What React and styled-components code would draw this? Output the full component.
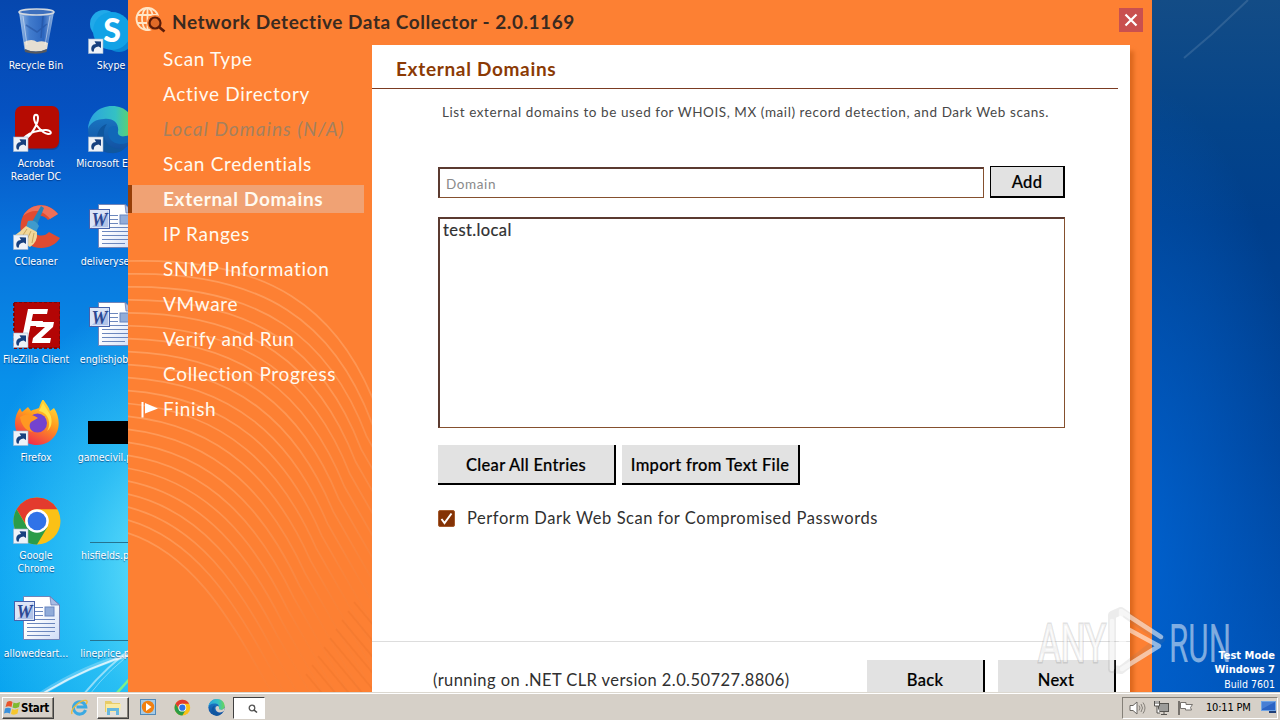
import styled, { createGlobalStyle } from "styled-components";

const GlobalStyle = createGlobalStyle`
  * {
    box-sizing: border-box;
  }
  body {
    margin: 0;
    overflow: hidden;
    font-family: Lato, "Liberation Sans", sans-serif;
  }
  svg {
    display: block;
  }
`;

const steps = [
  { name: "Scan Type" },
  { name: "Active Directory" },
  { name: "Local Domains (N/A)", disabled: true },
  { name: "Scan Credentials" },
  { name: "External Domains", active: true },
  { name: "IP Ranges" },
  { name: "SNMP Information" },
  { name: "VMware" },
  { name: "Verify and Run" },
  { name: "Collection Progress" },
  { name: "Finish", flag: true },
];

const Shortcut = () => (
  <g transform="translate(1.5 31)">
    <rect width="14.5" height="14.5" fill="#eef2f8" stroke="#9db4cf" strokeWidth=".6" />
    <path d="M3.5 12.5C1.5 8 4 5 7.500 5L6 2.200L12.500 2.500L12.500 9L10.200 7.500C7 8 5 9.500 5.500 12.500Z" fill="#17407e" />
  </g>
);

const RecycleBin = () => (
  <svg width="48" height="48" viewBox="0 0 48 48">
    <defs>
      <linearGradient id="bin">
        <stop offset="0" stopColor="#c5dcf3" stopOpacity=".85" />
        <stop offset=".3" stopColor="#5d92d8" stopOpacity=".7" />
        <stop offset=".7" stopColor="#3c72c4" stopOpacity=".7" />
        <stop offset="1" stopColor="#b3cdec" stopOpacity=".85" />
      </linearGradient>
    </defs>
    <path d="M7 4L12.500 42Q24 47 35 42L42 4Z" fill="url(#bin)" />
    <path d="M12 34Q20 30 25 34Q31 32 36 35L35 41Q24 46 13 41Z" fill="#e5dfd2" />
    <path d="M12.500 41Q24 46 35 41L34.500 44Q24 47.500 13 44Z" fill="#56595e" />
    <ellipse cx="24.500" cy="4" rx="17.500" ry="3" fill="#3e70bd" stroke="#d2d8df" strokeWidth="1.600" />
    <path d="M14 17L25 24L35 16M31 8L29 30" stroke="#224f9b" strokeWidth="1.500" fill="none" opacity=".55" />
    <path d="M11 8L15 37M38 8L33 37" stroke="#fff" opacity=".45" />
  </svg>
);

const Skype = () => (
  <svg width="48" height="48" viewBox="0 0 48 48">
    <circle cx="17" cy="16" r="14" fill="#21a9e9" />
    <circle cx="32" cy="30" r="14" fill="#0a87d4" />
    <circle cx="25" cy="23" r="19" fill="#12a2e6" />
    <text x="25" y="34" textAnchor="middle" fontFamily="Lato" fontWeight="900" fontSize="32" fill="#fff">S</text>
    <Shortcut />
  </svg>
);

const Acrobat = () => (
  <svg width="48" height="48" viewBox="0 0 48 48">
    <rect x="3.500" y="1" width="44" height="43" rx="7" fill="#18366d" opacity=".5" />
    <rect x="3" y="0" width="44" height="42.500" rx="7" fill="#b60b02" />
    <path d="M13 33C19 30 26 18 26 12C26 7.500 22 7.500 22 12C22 18 30 27 36 28C41 28.500 39 23.500 33 24C26 24.500 18 27 14 30C10 33 10 36 13 33Z" fill="none" stroke="#fff" strokeWidth="2" />
    <Shortcut />
  </svg>
);

const Edge = ({ size = 48, arrow = true }) => (
  <svg width={size} height={size} viewBox="0 0 48 48">
    <defs>
      <linearGradient id="edgeTop">
        <stop offset="0" stopColor="#2ba2df" />
        <stop offset=".6" stopColor="#34c1c4" />
        <stop offset="1" stopColor="#6bd753" />
      </linearGradient>
      <linearGradient id="edgeLow" x2="0" y2="1">
        <stop offset="0" stopColor="#1b7fcb" />
        <stop offset="1" stopColor="#124e9f" />
      </linearGradient>
    </defs>
    <circle cx="24" cy="24" r="23" fill="url(#edgeLow)" />
    <path d="M1 23C2 9 12 0 25 0C39 0 47 10 47 20C47 28 41 31 35 31C28 31 29 27 31 25C32 16 25 12 17 13C9 13 3 17 1 23Z" fill="url(#edgeTop)" />
    <path d="M17 26C16 36 24 44 37 43C32 48 22 49 15 43C7 36 9 21 20 18C18 21 17 23 17 26Z" fill="#0f579f" />
    <path d="M31 25C30 30 35 32 42 29L47 25L45 34C37 41 22 39 21 27C21 23 23 20 27 20C30 20 32 22 31 25Z" fill={arrow ? "#1167b8" : "#d6d0c8"} />
    {arrow && <Shortcut />}
  </svg>
);

const CCleaner = () => (
  <svg width="48" height="48" viewBox="0 0 48 48">
    <path d="M46 10C36-3 18-1 11 12C5 25 10 39 22 43C33 46 43 42 48 34L37 28C31 35 20 31 20 22C20 13 30 8 36 16Z" fill="#e04b31" />
    <path d="M46 10C36-3 18-1 11 12C20 5 30 5 38 15Z" fill="#ee7059" />
    <path d="M29 2L32 4L25 21L20 18Z" fill="#2584bb" />
    <path d="M16 17Q23 15 27 22L24 28L14 23Z" fill="#3f9bcd" />
    <path d="M14 22L25 28Q26 38 18 43Q8 37 2 32Q9 27 14 22Z" fill="#f1d799" />
    <path d="M15 25L9 34M19 27L14 38M22 29L20 39" stroke="#c8a45c" />
    <Shortcut />
  </svg>
);

const WordDoc = () => (
  <svg width="48" height="48" viewBox="0 0 48 48">
    <defs>
      <linearGradient id="page" x2="1" y2="1">
        <stop offset=".4" stopColor="#fff" />
        <stop offset="1" stopColor="#cfdcf6" />
      </linearGradient>
    </defs>
    <path d="M11.500.500H38L47.500 9V43.500H11.500Z" fill="url(#page)" stroke="#7285b8" />
    <path d="M38 .500L39 9H47.500Z" fill="#a9bce4" stroke="#5d73ad" strokeWidth=".7" />
    <path d="M23 11.500H31M23 15.500H31M23 19.500H31M15 23.500H43M15 27.500H43M15 31.500H43M15 35.500H43M15 39.500H38" stroke="#6c87bd" />
    <rect x="33" y="11" width="9" height="9" fill="#91acd9" stroke="#6886c0" />
    <rect x="2.500" y="5.500" width="20" height="19" fill="#dce5f7" stroke="#4762ab" />
    <path d="M4 24L21 7V23H4Z" fill="#b1c3e8" />
    <text x="12.500" y="21.500" textAnchor="middle" fontFamily="Liberation Serif" fontWeight="700" fontStyle="italic" fontSize="18" fill="#2c4892">W</text>
  </svg>
);

const FileZilla = () => (
  <svg width="48" height="48" viewBox="0 0 48 48">
    <rect x="2" y="0" width="46" height="46" fill="#b30505" stroke="#7d0709" strokeWidth="2" strokeDasharray="3 2" />
    <path d="M16 7H36L35 12H21L19.500 19H31L30 24H18.500L16 36H10Z" fill="#fff" />
    <path d="M25 20H42L41 25L29 36H39L38 41H20L21 36L33 25H24Z" fill="#fff" />
    <Shortcut />
  </svg>
);

const Firefox = () => (
  <svg width="48" height="48" viewBox="0 0 48 48">
    <defs>
      <linearGradient id="fox" x1=".8" y1="0" x2=".3" y2="1">
        <stop offset="0" stopColor="#ffe33b" />
        <stop offset=".45" stopColor="#ff9a1e" />
        <stop offset="1" stopColor="#f0264f" />
      </linearGradient>
    </defs>
    <path d="M31-1C34 4 37 7 38 11L42 8C47 15 48 25 45 32C41 41 33 45 25 45C13 45 3 36 3 23C3 17 5 12 8 8L10 12L16 7L19 11C22 9 26 9 27 8C28 5 29 2 31-1Z" fill="url(#fox)" />
    <circle cx="25.500" cy="23" r="9.500" fill="#7443cf" />
    <path d="M8 17C15 13 20 14 26 18L19 22C17 24 17 29 21 32C13 31 9 24 8 17Z" fill="#ff9822" />
    <path d="M27 11C38 13 39 26 35 31C41 27 41 17 36 11L31 3Z" fill="#ffe24a" />
    <Shortcut />
  </svg>
);

const Chrome = ({ size = 48, arrow = true }) => (
  <svg width={size} height={size} viewBox="0 0 48 48" overflow="visible">
    <circle cx="25" cy="23" r="23.500" fill="#fbc116" />
    <path d="M4.600 11.300A23.500 23.500 0 0 1 45.400 11.300H25A12 12 0 0 0 13 25Z" fill="#e33b2e" />
    <path d="M4.600 11.300A23.500 23.500 0 0 0 25 46.500L35.500 29L25 30L14.800 28.500Z" fill="#2b9c48" />
    <circle cx="25" cy="23" r="11.800" fill="#fff" />
    <circle cx="25" cy="23" r="9.300" fill="#2f73e8" />
    {arrow && <Shortcut />}
  </svg>
);

const BlackThumb = () => (
  <svg width="48" height="48">
    <rect x="1" y="21" width="47" height="23" />
  </svg>
);

const LineThumb = () => (
  <svg width="48" height="48">
    <path d="M3 44.500H48" stroke="#26738f" />
  </svg>
);

const shortcuts = [
  { name: "Recycle Bin", icon: <RecycleBin /> },
  { name: "Acrobat Reader DC", icon: <Acrobat />, wrap: true },
  { name: "CCleaner", icon: <CCleaner /> },
  { name: "FileZilla Client", icon: <FileZilla /> },
  { name: "Firefox", icon: <Firefox /> },
  { name: "Google Chrome", icon: <Chrome />, wrap: true },
  { name: "allowedeart...", icon: <WordDoc /> },
  { name: "Skype", icon: <Skype /> },
  { name: "Microsoft Edge", icon: <Edge /> },
  { name: "deliveryser...", icon: <WordDoc /> },
  { name: "englishjobs...", icon: <WordDoc /> },
  { name: "gamecivil.png", icon: <BlackThumb /> },
  { name: "hisfields.png", icon: <LineThumb /> },
  { name: "lineprice.png", icon: <LineThumb /> },
];

const Streaks = () => (
  <Wallpaper width="1280" height="692">
    <g fill="none" stroke="#fff">
      <path d="M38 696Q85 665 136 653" strokeWidth="5" opacity=".25" />
      <path d="M42 694Q88 666 136 653" strokeWidth="2" opacity=".75" />
      <path d="M84 694Q105 668 136 645" strokeWidth="2" opacity=".5" />
      <path d="M90 694Q110 668 136 650" opacity=".4" />
      <path d="M1184 58L1212 34L1248 0" strokeWidth="2" opacity=".12" />
    </g>
    <path d="M116 694L134 674" stroke="#79f08c" strokeWidth="2.500" />
  </Wallpaper>
);

// concentric waves behind the step list
const Waves = () => {
  const lines = [];
  for (let i = 0; i < 22; i++) {
    const t = i / 21;
    const mix = (a, b) => a + (b - a) * t;
    lines.push(
      <path
        key={i}
        d={`M0 ${mix(31, 303)}C${mix(140, 62)} ${mix(27, 323)} ${mix(212, 100)} ${mix(78, 385)} ${mix(250, 132)} ${mix(182, 442)}l60 105`}
      />
    );
  }
  return (
    <WaveArt width="244" height="462">
      <defs>
        <linearGradient id="wave" gradientUnits="userSpaceOnUse" x1="0" y1="120" x2="230" y2="370">
          <stop offset="0" stopColor="#ffb27c" stopOpacity=".55" />
          <stop offset=".5" stopColor="#ffb27c" stopOpacity=".45" />
          <stop offset=".85" stopColor="#f0a070" stopOpacity=".22" />
          <stop offset="1" stopColor="#e08850" stopOpacity=".08" />
        </linearGradient>
      </defs>
      <g fill="none" stroke="url(#wave)" strokeWidth="1.700">
        {lines}
      </g>
      <g stroke="#e06a25" strokeOpacity=".22" strokeWidth="1.800">
        {[0, 1, 2, 3, 4, 5, 6, 7, 8].map((i) => (
          <path key={i} d={`M${178 + i * 6} ${444 - i * 9}l70 84`} />
        ))}
      </g>
    </WaveArt>
  );
};

const Watermark = () => (
  <Mark width="230" height="74">
    <g fontFamily="Roboto" fontSize="53" fill="#fff">
      <g fill="#fff" fillOpacity=".6" stroke="#777" strokeOpacity=".22" strokeWidth="3" paintOrder="stroke">
        <text x="8" y="56" textLength="68" lengthAdjust="spacingAndGlyphs">ANY</text>
      </g>
      <text x="139" y="56" textLength="62" lengthAdjust="spacingAndGlyphs" fillOpacity=".5">RUN</text>
    </g>
    <g fill="none" strokeLinejoin="round" strokeLinecap="round">
      <path d="M82 63V9L91 5L131 33L91 64Z" stroke="#777" strokeOpacity=".14" strokeWidth="8" />
      <path d="M82 63V15M91 46V5L131 31M94 48V21L129 40L92 63" stroke="#fff" strokeOpacity=".55" strokeWidth="4.500" />
    </g>
  </Mark>
);

function App() {
  return (
    <Desktop>
      <GlobalStyle />
      <Streaks />
      <IconGrid>
        {shortcuts.map((item) => (
          <DesktopIcon key={item.name}>
            {item.icon}
            <IconLabel $wrap={item.wrap}>{item.name}</IconLabel>
          </DesktopIcon>
        ))}
      </IconGrid>
      <BuildInfo>
        <b>Test Mode</b>
        <b>Windows 7</b>
        <span>Build 7601</span>
      </BuildInfo>

      <Window>
        <TitleBar>
          <svg width="31" height="27" viewBox="0 0 31 27">
            <g fill="none" stroke="#ffe6c8" strokeWidth="1.800">
              <circle cx="12.500" cy="12" r="11" />
              <ellipse cx="12.500" cy="12" rx="5.500" ry="11" />
              <path d="M12.500 1V23M2 8H23M2 16H16" />
            </g>
            <circle cx="20" cy="16" r="8" fill="#fd8033" />
            <circle cx="20" cy="16" r="5.500" fill="#e06b28" stroke="#5b1c08" strokeWidth="2.200" />
            <path d="M24 20L29.500 24.500" stroke="#5b1c08" strokeWidth="2.800" />
          </svg>
          <Title>Network Detective Data Collector - 2.0.1169</Title>
          <CloseButton>
            <svg width="14" height="14" viewBox="0 0 14 14">
              <path d="M1.500 1.500L12.500 12.500M12.500 1.500L1.500 12.500" stroke="#fff" strokeWidth="2.200" />
            </svg>
          </CloseButton>
        </TitleBar>
        <WindowBody>
          <Sidebar>
            <Waves />
            {steps.map((step) => (
              <Step key={step.name} $active={step.active} $disabled={step.disabled}>
                {step.flag && (
                  <Flag width="17" height="17" viewBox="0 0 17 17">
                    <path d="M1.500 1V16.500" stroke="#fff" strokeWidth="2" />
                    <path d="M4 2L17 7.500L4 12.500Z" fill="#fff" />
                  </Flag>
                )}
                {step.name}
              </Step>
            ))}
          </Sidebar>
          <Panel>
            <Heading>External Domains</Heading>
            <Content>
              <Hint>List external domains to be used for WHOIS, MX (mail) record detection, and Dark Web scans.</Hint>
              <EntryRow>
                <DomainInput placeholder="Domain" />
                <AddButton>Add</AddButton>
              </EntryRow>
              <DomainList>test.local</DomainList>
              <ButtonRow>
                <Button>Clear All Entries</Button>
                <Button>Import from Text File</Button>
              </ButtonRow>
              <CheckRow>
                <CheckBox>
                  <svg width="13" height="13" viewBox="0 0 13 13">
                    <path d="M1.500 7L4.500 11L11.500 1.500" fill="none" stroke="#fff" strokeWidth="2" />
                  </svg>
                </CheckBox>
                Perform Dark Web Scan for Compromised Passwords
              </CheckRow>
            </Content>
            <PanelFooter>
              <Runtime>(running on .NET CLR version 2.0.50727.8806)</Runtime>
              <NavButton>Back</NavButton>
              <NavButton>Next</NavButton>
            </PanelFooter>
          </Panel>
        </WindowBody>
      </Window>

      <Taskbar>
        <StartButton>
          <svg width="17" height="16" viewBox="0 0 17 16">
            <path d="M3 2Q6 0 8.500 2L7.500 7Q4.500 5.500 1.500 7Z" fill="#e9542c" />
            <path d="M9.500 2.500Q12.500 4 16 2L15 7Q12 9 8.500 7.500Z" fill="#7fba32" />
            <path d="M1 8.500Q4 7 7 8.500L6 13.500Q3 12 0 13.500Z" fill="#3a91dc" />
            <path d="M8 9Q11 10.500 14.500 8.500L13.500 13.500Q10.500 15.500 7 14Z" fill="#f6c62d" />
          </svg>
          Start
        </StartButton>
        <QuickItem $left={9}>
          <svg width="17" height="17" viewBox="0 0 17 17">
            <path d="M14.500 11A6.200 6.200 0 1 1 14.800 8H5.500" fill="none" stroke="#3ba9e2" strokeWidth="3" />
            <path d="M1 15C-1 10 9 1 15 1.500C17 2 16 4 15 5" fill="none" stroke="#eebb37" strokeWidth="1.300" />
          </svg>
        </QuickItem>
        <QuickItem $open $left={2}>
          <svg width="18" height="17" viewBox="0 0 18 17">
            <path d="M1 2H7L8.500 4H16V13H1Z" fill="#e8cc68" />
            <path d="M2 5H17L16 13H2Z" fill="#faeba4" />
            <path d="M3 9H15V16H12V12H6V16H3Z" fill="#68b8df" />
          </svg>
        </QuickItem>
        <QuickItem $left={2}>
          <svg width="17" height="17" viewBox="0 0 17 17">
            <rect x=".5" y=".5" width="15" height="15" fill="#a6cbe7" stroke="#5289b7" />
            <circle cx="8" cy="8" r="6.200" fill="#f28010" />
            <path d="M6 4L11.500 8L6 12Z" fill="#fff" />
          </svg>
        </QuickItem>
        <QuickItem $left={2}>
          <Chrome size={16} arrow={false} />
        </QuickItem>
        <QuickItem $left={2}>
          <Edge size={17} arrow={false} />
        </QuickItem>
        <ActiveTask>
          <svg width="10" height="10" viewBox="0 0 10 10">
            <circle cx="4" cy="4" r="2.800" fill="none" stroke="#555" strokeWidth="1.300" />
            <path d="M6 6L9 8.500" stroke="#444" strokeWidth="1.600" />
          </svg>
        </ActiveTask>
        <Tray>
          <svg width="17" height="16" viewBox="0 0 17 16">
            <path d="M1 5.500H4L8 2V14L4 10.500H1Z" fill="#fff" stroke="#6a6762" />
            <path d="M10 5.500Q12 8 10 10.500M12 4Q15 8 12 12M14 2.500Q18 8 14 13.500" fill="none" stroke="#85817b" />
          </svg>
          <svg width="17" height="16" viewBox="0 0 17 16">
            <rect x="5.500" y="3.500" width="10" height="8" fill="#9c9c9a" stroke="#55534f" />
            <path d="M8 14.500H14M11 12V14" stroke="#55534f" />
            <path d="M1.500 1V6H6.500V1M3 1V4M5 1V4M4 6V13H7" stroke="#55534f" fill="#fff" />
          </svg>
          <svg width="17" height="16" viewBox="0 0 17 16">
            <path d="M2 1V15" stroke="#77736e" strokeWidth="2" />
            <path d="M3.500 2.500H9V4.500H15.500L13.500 7.500L14.500 10H8.500V8.500H3.500Z" fill="#fff" stroke="#77736e" />
          </svg>
          <Clock>10:11 PM</Clock>
          <svg width="16" height="13" viewBox="0 0 16 13">
            <rect x=".5" y=".5" width="14" height="9" fill="#2b63c4" stroke="#6fa3e4" />
            <path d="M1 1H14L1 8Z" fill="#5b91e0" opacity=".6" />
            <path d="M8 11H15" stroke="#203f78" strokeWidth="2" />
          </svg>
        </Tray>
      </Taskbar>
      <Watermark />
    </Desktop>
  );
}

export default App;

const Desktop = styled.div`
  position: relative;
  width: 1280px;
  height: 720px;
  overflow: hidden;
  background:
    radial-gradient(ellipse 210px 280px at 180px 570px, rgba(125, 240, 252, 0.9), rgba(70, 215, 248, 0.55) 50%, rgba(20, 160, 240, 0)) no-repeat,
    radial-gradient(ellipse 180px 480px at 1130px 560px, rgba(0, 104, 218, 0.8), rgba(0, 80, 180, 0)) 0 0 / 1280px 720px no-repeat,
    linear-gradient(#134c86, #04448a 18%, #003f8c 32%, #00449a 65%, #0050b2) 1152px 0 / 128px 692px no-repeat,
    linear-gradient(#0647ae, #0552c2 16%, #0871da 32%, #0890ea 53%, #0aa0f2 75%, #06a2ef 692px);
`;
const Wallpaper = styled.svg`
  position: absolute;
  top: 0;
  left: 0;
`;
const IconGrid = styled.div`
  display: grid;
  grid-auto-flow: column;
  grid-template-columns: 72px 72px;
  grid-template-rows: repeat(7, 98px);
  column-gap: 3px;
  width: 147px;
`;
const DesktopIcon = styled.div`
  position: relative;
  display: flex;
  flex-direction: column;
  align-items: center;
  padding-top: 8px;
`;
const IconLabel = styled.span`
  width: ${(props) => (props.$wrap ? "58px" : "auto")};
  margin-top: 3px;
  color: #fff;
  font: 10.5px/13px "DejaVu Sans Condensed", "DejaVu Sans", sans-serif;
  text-align: center;
  text-shadow: 0 1px 1px rgba(0, 30, 90, 0.6);
  white-space: ${(props) => (props.$wrap ? "normal" : "nowrap")};
`;
const BuildInfo = styled.div`
  position: absolute;
  right: 5px;
  bottom: 28px;
  display: flex;
  flex-direction: column;
  align-items: flex-end;
  color: #fff;
  font: 10.5px/15px "DejaVu Sans Condensed", "DejaVu Sans", sans-serif;
  b {
    font-size: 11px;
    line-height: 14px;
  }
`;

const Window = styled.div`
  position: absolute;
  top: 0;
  left: 128px;
  display: flex;
  flex-direction: column;
  width: 1024px;
  height: 692px;
  background: #fd8033;
`;
const TitleBar = styled.div`
  display: flex;
  align-items: flex-start;
  height: 45px;
  padding: 7px 9px 0 7px;
`;
const Title = styled.h1`
  flex: 1;
  margin: 2px 0 0 6px;
  color: #3a2a20;
  font-size: 19px;
  line-height: 26px;
  font-weight: 700;
  letter-spacing: 0.54px;
  white-space: nowrap;
`;
const CloseButton = styled.button`
  display: flex;
  align-items: center;
  justify-content: center;
  width: 24px;
  height: 24px;
  margin-top: 1px;
  padding: 0;
  border: none;
  background: #c9504f;
`;
const WindowBody = styled.div`
  display: flex;
  flex: 1;
  min-height: 0;
  padding-right: 22px;
`;
const Sidebar = styled.div`
  position: relative;
  display: flex;
  flex-direction: column;
  gap: 7px;
  width: 244px;
`;
const WaveArt = styled.svg`
  position: absolute;
  left: 0;
  bottom: 0;
`;
const Step = styled.div`
  position: relative;
  display: flex;
  align-items: center;
  width: 236px;
  height: 28px;
  padding: 0 0 1px 31px;
  border-left: 4px solid ${(props) => (props.$active ? "#963f08" : "transparent")};
  background: ${(props) => (props.$active ? "#f0a274" : "transparent")};
  color: ${(props) => (props.$disabled ? "#a4805f" : "#fffaf0")};
  font-size: 19px;
  font-style: ${(props) => (props.$disabled ? "italic" : "normal")};
  font-weight: ${(props) => (props.$active ? 700 : 400)};
  letter-spacing: ${(props) => (props.$disabled ? "1.05px" : "0.68px")};
  white-space: nowrap;
`;
const Flag = styled.svg`
  position: absolute;
  left: 9px;
  top: 6px;
`;

const Panel = styled.div`
  display: flex;
  flex-direction: column;
  flex: 1;
  background: #fff;
  box-shadow: 5px 5px 4px -1px #dd681e;
`;
const Heading = styled.h2`
  height: 44px;
  margin: 0 12px 0 0;
  padding-left: 24px;
  border-bottom: 1px solid #7b3b22;
  color: #8b3a04;
  font-size: 19px;
  line-height: 48px;
  letter-spacing: 0.68px;
`;
const Content = styled.div`
  display: flex;
  flex-direction: column;
  flex: 1;
  padding: 0 65px 0 66px;
  color: #303030;
  font-size: 16.5px;
`;
const Hint = styled.p`
  height: 77px;
  margin: 0;
  padding: 13px 0 0 4px;
  color: #484848;
  font-size: 13.5px;
  line-height: 20px;
  letter-spacing: 0.57px;
  white-space: nowrap;
`;
const EntryRow = styled.div`
  display: flex;
  gap: 6px;
  height: 32px;
  margin-bottom: 19px;
`;
const DomainInput = styled.input`
  flex: 1;
  height: 31px;
  margin-top: 1px;
  padding: 2px 6px 1px;
  border: 1px solid #85502e;
  border-width: 2px 1px 1px 2px;
  border-color: #5b3a30 #85502e #85502e #5b3a30;
  outline: none;
  font-family: inherit;
  font-size: 13.5px;
  letter-spacing: 0.6px;
  &::placeholder {
    color: #8a8a8a;
  }
`;
const Button = styled.button`
  width: 178px;
  height: 40px;
  padding: 1px 0 0;
  border: solid #000;
  border-width: 0 2px 2px 0;
  background: #e2e2e2;
  color: #000;
  font: 16.5px Lato, sans-serif;
  font-weight: 500;
  letter-spacing: 0.3px;
  -webkit-text-stroke: 0.2px #000;
  white-space: nowrap;
`;
const AddButton = styled(Button)`
  width: 75px;
  height: 32px;
  border-width: 1px 2px 2px 1px;
`;
const DomainList = styled.div`
  height: 211px;
  padding: 1px 3px;
  border: 1px solid #85502e;
  border-width: 2px 1px 1px 2px;
  border-color: #5b3a30 #85502e #85502e #5b3a30;
  line-height: 21px;
  letter-spacing: 0.4px;
  -webkit-text-stroke: 0.2px #303030;
`;
const ButtonRow = styled.div`
  display: flex;
  gap: 6px;
  margin-top: 17px;
`;
const CheckRow = styled.div`
  display: flex;
  align-items: center;
  gap: 12px;
  height: 22px;
  margin-top: 22px;
  line-height: 20px;
  padding-bottom: 1px;
  white-space: nowrap;
  letter-spacing: 0.56px;
`;
const CheckBox = styled.span`
  display: flex;
  align-items: center;
  justify-content: center;
  width: 17px;
  height: 17px;
  margin-top: 1px;
  border: 1px solid #a45a2c;
  border-radius: 2px;
  background: #843205;
`;
const PanelFooter = styled.div`
  display: flex;
  gap: 13px;
  height: 51px;
  padding: 18px 14px 0 61px;
  border-top: 1px solid #ddd;
  overflow: hidden;
`;
const Runtime = styled.span`
  flex: 1;
  padding-top: 10px;
  color: #303030;
  font-size: 16.5px;
  line-height: 20px;
  letter-spacing: 0.42px;
  white-space: nowrap;
`;
const NavButton = styled(Button)`
  width: 118px;
`;

const Taskbar = styled.div`
  position: absolute;
  left: 0;
  bottom: 0;
  display: flex;
  align-items: center;
  width: 100%;
  height: 28px;
  padding: 2px 2px 0;
  border-top: 1px solid #dcd8d0;
  box-shadow: inset 0 1px #fff;
  background: #d6d0c8;
`;
const StartButton = styled.div`
  display: flex;
  align-items: center;
  width: 52px;
  height: 22px;
  padding-left: 1px;
  border: 1px solid #fff;
  border-right: 1px solid #404040;
  border-bottom: 1px solid #404040;
  box-shadow: inset -1px -1px #858078;
  font: bold 11.5px "DejaVu Sans Condensed", sans-serif;
  letter-spacing: -0.3px;
`;
const QuickItem = styled.div`
  display: flex;
  align-items: center;
  justify-content: center;
  width: 32px;
  height: 22px;
  margin-left: ${(props) => props.$left}px;
  ${(props) =>
    props.$open &&
    `
    margin-right: 1px;
    background: #e4e0da;
    border: 1px solid #fff;
    border-right-color: #404040;
    border-bottom-color: #404040;
    box-shadow: inset -1px -1px #858078;
  `}
`;
const ActiveTask = styled.div`
  display: flex;
  align-items: center;
  width: 32px;
  height: 22px;
  margin-left: 1px;
  padding: 2px 0 0 14px;
  border: 1px solid #fff;
  border-top-color: #404040;
  border-left-color: #404040;
  background: #fff;
`;
const Tray = styled.div`
  display: flex;
  align-items: center;
  gap: 7px;
  width: 156px;
  height: 22px;
  margin-left: auto;
  padding-left: 6px;
  border: 1px solid #fff;
  border-top-color: #858078;
  border-left-color: #858078;
`;
const Clock = styled.span`
  flex: 1;
  margin-left: 5px;
  font: 11px "DejaVu Sans Condensed", sans-serif;
  letter-spacing: -0.2px;
  white-space: nowrap;
`;
const Mark = styled.svg`
  position: absolute;
  left: 1030px;
  top: 606px;
`;
